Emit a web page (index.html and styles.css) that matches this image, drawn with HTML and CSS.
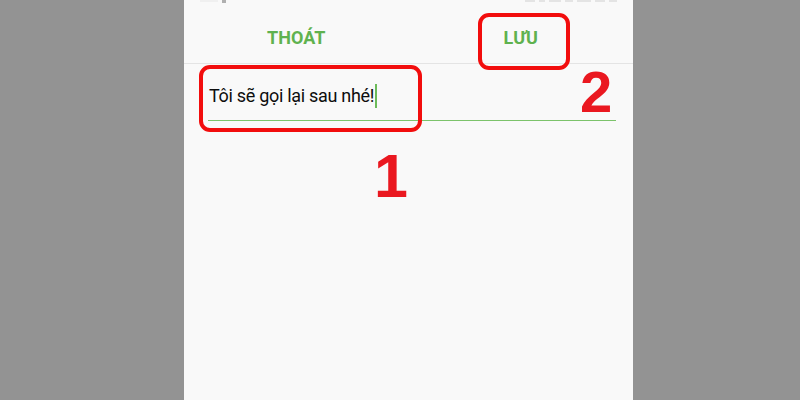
FILE: index.html
```html
<!DOCTYPE html>
<html lang="vi">
<head>
<meta charset="utf-8">
<link rel="stylesheet" href="styles.css">
</head>
<body>
<div class="phone">
  <div class="status">
    <div class="st-group">
      <i class="dot w18"></i><i class="dot w4 dark"></i>
    </div>
    <div class="st-group">
      <i class="dot w10"></i><i class="dot w6"></i><i class="dot w12"></i><i class="dot w8"></i><i class="dot w14"></i><i class="dot w10"></i><i class="dot w8"></i>
    </div>
  </div>
  <div class="header">
    <div class="btn">THOÁT</div>
    <div class="btn">LƯU</div>
  </div>
  <div class="field">
    <div class="input">Tôi sẽ gọi lại sau nhé!<span class="cursor"></span></div>
  </div>
  <div class="mark box1"></div>
  <div class="mark box2"></div>
  <div class="num num1">1</div>
  <div class="num num2">2</div>
</div>
</body>
</html>
```
FILE: styles.css
```css
html, body {
  margin: 0;
  padding: 0;
}
body {
  background: #939393;
  width: 800px;
  height: 400px;
  overflow: hidden;
}
.phone {
  position: relative;
  margin-left: 184px;
  width: 449px;
  height: 400px;
  background: #f9f9f9;
  font-family: Roboto, "Noto Sans", sans-serif;
}
.status {
  height: 4px;
  display: flex;
  justify-content: space-between;
  padding: 0 16px 0 16px;
}
.st-group {
  display: flex;
  gap: 4px;
  align-items: flex-start;
}
.dot {
  display: block;
  height: 2px;
  background: #e4e4e4;
}
.dot.dark {
  background: #b0b0b0;
  height: 3px;
}
.w4 { width: 4px; }
.w6 { width: 6px; }
.w8 { width: 8px; }
.w10 { width: 10px; }
.w12 { width: 12px; }
.w14 { width: 14px; }
.w18 { width: 18px; background: #f0f0f0; }
.header {
  display: flex;
  height: 59px;
  border-bottom: 1px solid #e4e4e4;
}
.btn {
  flex: 1;
  text-align: center;
  padding-top: 24px;
  font-size: 18px;
  font-weight: 700;
  line-height: 20px;
  color: #5fb24f;
}
.field {
  padding: 20px 17px 0 24px;
}
.input {
  font-size: 18px;
  letter-spacing: -0.3px;
  line-height: 24px;
  color: #0d0d0d;
  padding: 0 0 12px 1px;
  border-bottom: 1px solid #7cc36b;
}
.cursor {
  display: inline-block;
  width: 2px;
  height: 24px;
  background: #6cbb5a;
  vertical-align: -6px;
  margin-left: 1px;
}
.mark {
  position: absolute;
  border: 4px solid #f20d0d;
  border-radius: 11px;
  box-sizing: border-box;
}
.box1 {
  left: 15px;
  top: 65px;
  width: 223px;
  height: 67px;
}
.box2 {
  left: 294px;
  top: 13px;
  width: 92px;
  height: 57px;
}
.num {
  position: absolute;
  font-family: "Liberation Sans", Arial, sans-serif;
  font-weight: 700;
  color: #ea1820;
  line-height: 1;
}
.num1 {
  left: 190px;
  top: 146px;
  font-size: 61px;
}
.num2 {
  left: 396px;
  top: 63px;
  font-size: 58px;
}
```
